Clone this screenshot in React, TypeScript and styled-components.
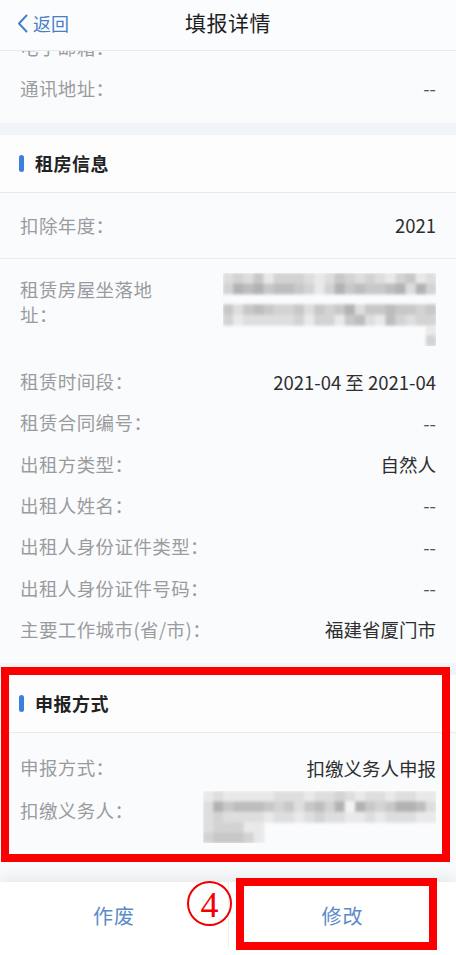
import React from 'react';
import styled, { createGlobalStyle } from 'styled-components';

const GlobalStyle = createGlobalStyle`
  html, body {
    margin: 0;
    padding: 0;
    background: #fafbfd;
  }
  body {
    font-family: 'Noto Sans CJK SC', 'Noto Sans', sans-serif;
  }
  * { box-sizing: border-box; }
`;

const Page = styled.div`
  position: relative;
  width: 456px;
  height: 955px;
  display: flex;
  flex-direction: column;
  overflow: hidden;
  background: #fafbfd;
`;

const Header = styled.header`
  position: relative;
  z-index: 2;
  height: 51px;
  flex-shrink: 0;
  display: flex;
  align-items: center;
  justify-content: center;
  background: #fbfcfe;
  border-bottom: 1px solid #e8eaee;
`;

const BackButton = styled.button`
  position: absolute;
  left: 17px;
  top: 12px;
  display: flex;
  align-items: center;
  gap: 5px;
  padding: 0;
  border: 0;
  background: none;
  font-family: inherit;
  font-size: 18px;
  line-height: 22px;
  color: #4b7fc4;
`;

const Title = styled.h1`
  margin: 0 0 6px;
  font-size: 21px;
  font-weight: 400;
  color: #1e1e1e;
  letter-spacing: 0.5px;
`;

const Scroller = styled.main`
  flex: 1;
  overflow: hidden;
`;

const Card = styled.section<{ $offset?: number }>`
  margin-top: ${(p) => p.$offset ?? 0}px;
  background: #fafbfd;
`;

const Band = styled.div`
  height: 12px;
  background: #f1f4f8;
`;

const SectionHead = styled.div`
  height: 58px;
  display: flex;
  align-items: center;
  gap: 11px;
  padding-left: 19px;
  border-bottom: 1px solid #e9eaed;
  background: #fdfdfe;
  font-size: 18px;
  font-weight: 700;
  color: #222;
  letter-spacing: 0.5px;

  &::before {
    content: '';
    width: 5px;
    height: 17px;
    border-radius: 3px;
    background: #3d7fdc;
  }
`;

const Group = styled.div<{ $top?: number; $bottom?: number; $divider?: boolean }>`
  padding: ${(p) => p.$top ?? 0}px 20px ${(p) => p.$bottom ?? 0}px;
  border-bottom: ${(p) => (p.$divider ? '1px solid #ececef' : 'none')};
`;

const Row = styled.div`
  height: 41.3px;
  display: flex;
  align-items: center;
  justify-content: space-between;
  font-size: 18.5px;
  line-height: 22px;
`;

const TallRow = styled.div<{ $top?: number; $bottom?: number }>`
  display: flex;
  align-items: flex-start;
  justify-content: space-between;
  padding: ${(p) => p.$top ?? 0}px 0 ${(p) => p.$bottom ?? 0}px;
  font-size: 18.5px;
`;

const Label = styled.span<{ $width?: number; $offset?: number }>`
  color: #9a9b9e;
  line-height: 25px;
  max-width: ${(p) => (p.$width ? `${p.$width}px` : 'none')};
  margin-top: ${(p) => p.$offset ?? 0}px;
  letter-spacing: 0.4px;
`;

const Value = styled.span<{ $dim?: boolean }>`
  color: ${(p) => (p.$dim ? '#555' : '#2e2e2e')};
  text-align: right;
`;

const BottomBar = styled.footer`
  position: relative;
  z-index: 2;
  height: 73px;
  flex-shrink: 0;
  display: grid;
  grid-template-columns: 1fr 1fr;
  align-items: start;
  background: #fff;
  box-shadow: 0 -6px 14px rgba(0, 0, 0, 0.07);
`;

const BarButton = styled.button<{ $divider?: boolean }>`
  height: 66px;
  border: 0;
  background: none;
  font-family: inherit;
  font-size: 20px;
  color: #5b8bc8;
  letter-spacing: 1px;
  border-left: ${(p) => (p.$divider ? '1px solid #efefef' : 'none')};
`;

const Annotation = styled.div<{ $top: number; $left: number; $w: number; $h: number }>`
  position: absolute;
  z-index: 3;
  top: ${(p) => p.$top}px;
  left: ${(p) => p.$left}px;
  width: ${(p) => p.$w}px;
  height: ${(p) => p.$h}px;
  border: 8px solid #fb0000;
  pointer-events: none;
`;

/* circled step number, drawn as a ring with a serif digit */
const StepMark = styled.span`
  position: absolute;
  z-index: 3;
  top: 881px;
  left: 187px;
  width: 45px;
  height: 45px;
  border: 2.5px solid #f00000;
  border-radius: 50%;
  display: flex;
  align-items: center;
  justify-content: center;
  font-family: 'Liberation Serif', 'DejaVu Serif', serif;
  font-size: 36px;
  line-height: 1;
  color: #f00000;
  padding-top: 2px;
`;

type MosaicProps = { grid: string[]; width: number; height: number };

function Mosaic({ grid, width, height }: MosaicProps) {
  const cols = grid[0].length;
  const cw = width / cols;
  const ch = height / grid.length;
  return (
    <svg width={width} height={height} style={{ display: 'block' }}>
      <defs>
        <filter id="soft" x="-5%" y="-5%" width="110%" height="110%">
          <feGaussianBlur stdDeviation="1.4" />
        </filter>
      </defs>
      <g filter="url(#soft)">
        {grid.map((line, r) =>
          line.split('').map((c, i) => {
            if (c === ' ') return null;
            const g = 244 - Number(c) * 11;
            return (
              <rect
                key={`${r}-${i}`}
                x={i * cw}
                y={r * ch}
                width={cw + 0.5}
                height={ch + 0.5}
                fill={`rgb(${g},${g},${g})`}
              />
            );
          })
        )}
      </g>
    </svg>
  );
}

const addressGrid = [
  '232413332124323213412',
  '365645543136454456263',
  '                     ',
  '424543342434624454434',
  '312222231331452153233',
  '                    1',
  '                    3',
];

const agentGrid = [
  '12111112221223212212211',
  '26455543424536064346652',
  '23222212212322112122211',
  '233311                 ',
  '344431                 ',
];

const rentRows: [string, string, boolean?][] = [
  ['租赁时间段：', '2021-04 至 2021-04'],
  ['租赁合同编号：', '--', true],
  ['出租方类型：', '自然人'],
  ['出租人姓名：', '--', true],
  ['出租人身份证件类型：', '--', true],
  ['出租人身份证件号码：', '--', true],
  ['主要工作城市(省/市)：', '福建省厦门市'],
];

export default function App() {
  return (
    <Page>
      <GlobalStyle />
      <Header>
        <BackButton>
          <svg width="11" height="19" viewBox="0 0 11 19">
            <polyline
              points="9.5,1.5 2,9.5 9.5,17.5"
              fill="none"
              stroke="#4b7fc4"
              strokeWidth="2"
              strokeLinecap="round"
              strokeLinejoin="round"
            />
          </svg>
          返回
        </BackButton>
        <Title>填报详情</Title>
      </Header>

      <Scroller>
        <Card $offset={-24.5}>
          <Group $bottom={13.5}>
            <Row>
              <Label>电子邮箱：</Label>
            </Row>
            <Row>
              <Label>通讯地址：</Label>
              <Value $dim>--</Value>
            </Row>
          </Group>
        </Card>
        <Band />

        <Card>
          <SectionHead>租房信息</SectionHead>
          <Group $top={12} $bottom={12} $divider>
            <Row>
              <Label>扣除年度：</Label>
              <Value>2021</Value>
            </Row>
          </Group>
          <Group $bottom={13}>
            <TallRow $top={14} $bottom={15}>
              <Label $width={140} $offset={4}>
                租赁房屋坐落地址：
              </Label>
              <Mosaic grid={addressGrid} width={213} height={73} />
            </TallRow>
            {rentRows.map(([label, value, dim]) => (
              <Row key={label}>
                <Label>{label}</Label>
                <Value $dim={dim}>{value}</Value>
              </Row>
            ))}
          </Group>
        </Card>
        <Band />

        <Card>
          <SectionHead>申报方式</SectionHead>
          <Group $top={14}>
            <Row>
              <Label>申报方式：</Label>
              <Value>扣缴义务人申报</Value>
            </Row>
            <TallRow $top={3}>
              <Label $offset={7}>扣缴义务人：</Label>
              <Mosaic grid={agentGrid} width={233} height={52} />
            </TallRow>
          </Group>
        </Card>
      </Scroller>

      <BottomBar>
        <BarButton>作废</BarButton>
        <BarButton $divider>修改</BarButton>
      </BottomBar>

      <Annotation $top={667} $left={1} $w={449} $h={195} />
      <Annotation $top={878} $left={236} $w={201} $h={72} />
      <StepMark>4</StepMark>
    </Page>
  );
}
